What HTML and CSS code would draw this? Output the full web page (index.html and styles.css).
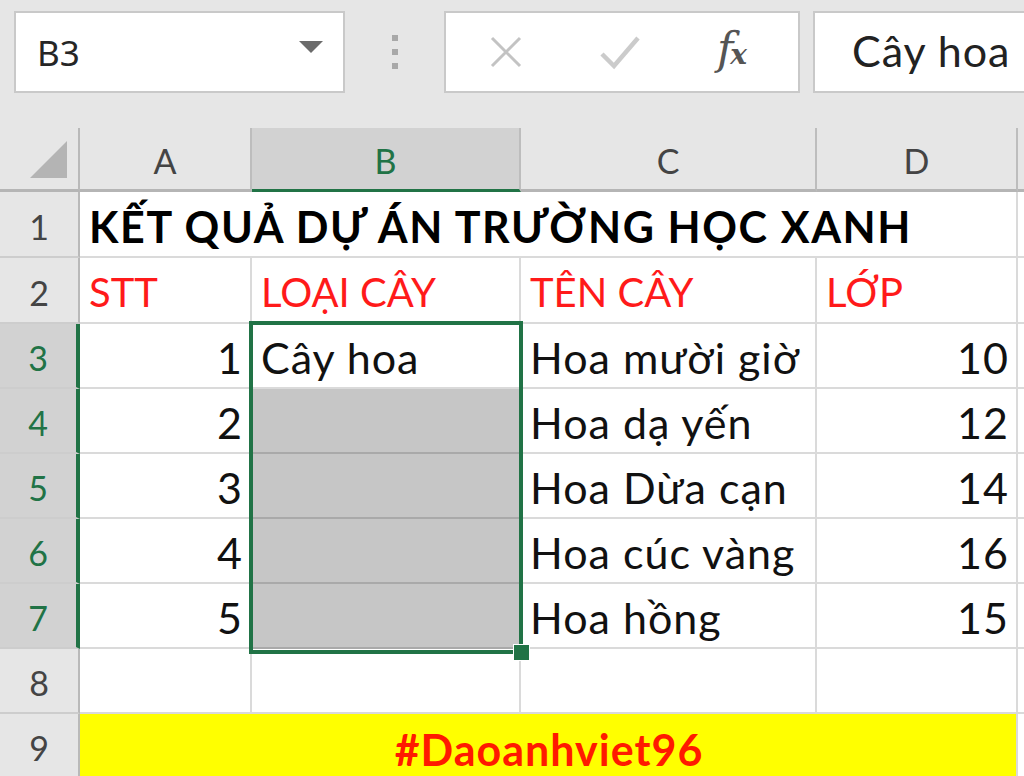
FILE: index.html
```html
<!DOCTYPE html>
<html lang="vi">
<head>
    <meta charset="UTF-8">
    <meta name="viewport" content="width=device-width, initial-scale=1.0">
    <title>Kết quả dự án trường học xanh</title>
    <link rel="stylesheet" href="styles.css">
</head>
<body>
    <div class="app">
        <div class="toolbar">
            <div class="name-box">
                <span class="name-text">B3</span>
                <span class="drop-arrow"></span>
            </div>
            <div class="grip">
                <span></span><span></span><span></span>
            </div>
            <div class="func-box">
                <svg class="icon-x" width="36" height="36" viewBox="0 0 36 36">
                    <path d="M4 4 L32 32 M32 4 L4 32" stroke="#c3c3c3" stroke-width="3" fill="none"/>
                </svg>
                <svg class="icon-check" width="42" height="36" viewBox="0 0 42 36">
                    <path d="M3 20 L15 32 L39 4" stroke="#cbcbcb" stroke-width="4.5" fill="none"/>
                </svg>
                <span class="icon-fx">f<span class="fx-x">x</span></span>
            </div>
            <div class="formula-input">Cây hoa</div>
        </div>

        <div class="sheet">
            <!-- header row -->
            <div class="corner"><span class="corner-tri"></span></div>
            <div class="col-head">A</div>
            <div class="col-head active">B</div>
            <div class="col-head">C</div>
            <div class="col-head">D</div>
            <div class="col-head last"></div>

            <!-- row 1 -->
            <div class="row-head">1</div>
            <div class="cell title span-4">KẾT QUẢ DỰ ÁN TRƯỜNG HỌC XANH</div>
            <div class="cell"></div>

            <!-- row 2 -->
            <div class="row-head">2</div>
            <div class="cell red">STT</div>
            <div class="cell red">LOẠI CÂY</div>
            <div class="cell red">TÊN CÂY</div>
            <div class="cell red">LỚP</div>
            <div class="cell"></div>

            <!-- row 3 -->
            <div class="row-head active">3</div>
            <div class="cell num">1</div>
            <div class="cell">Cây hoa</div>
            <div class="cell">Hoa mười giờ</div>
            <div class="cell num">10</div>
            <div class="cell"></div>

            <!-- row 4 -->
            <div class="row-head active">4</div>
            <div class="cell num">2</div>
            <div class="cell picked"></div>
            <div class="cell">Hoa dạ yến</div>
            <div class="cell num">12</div>
            <div class="cell"></div>

            <!-- row 5 -->
            <div class="row-head active">5</div>
            <div class="cell num">3</div>
            <div class="cell picked"></div>
            <div class="cell">Hoa Dừa cạn</div>
            <div class="cell num">14</div>
            <div class="cell"></div>

            <!-- row 6 -->
            <div class="row-head active">6</div>
            <div class="cell num">4</div>
            <div class="cell picked"></div>
            <div class="cell">Hoa cúc vàng</div>
            <div class="cell num">16</div>
            <div class="cell"></div>

            <!-- row 7 -->
            <div class="row-head active">7</div>
            <div class="cell num">5</div>
            <div class="cell picked"></div>
            <div class="cell">Hoa hồng</div>
            <div class="cell num">15</div>
            <div class="cell"></div>

            <!-- row 8 -->
            <div class="row-head">8</div>
            <div class="cell"></div>
            <div class="cell"></div>
            <div class="cell"></div>
            <div class="cell"></div>
            <div class="cell"></div>

            <!-- row 9 -->
            <div class="row-head">9</div>
            <div class="cell banner span-4">#Daoanhviet96</div>
            <div class="cell"></div>

            <!-- selection B3:B7 -->
            <div class="selection"><span class="fill-handle"></span></div>
        </div>
    </div>
</body>
</html>
```

FILE: styles.css
```css
body {
    margin: 0;
    background: #e6e6e6;
    font-family: 'Lato', 'Liberation Sans', sans-serif;
}

.app {
    width: 1024px;
    height: 776px;
    overflow: hidden;
    background: #e6e6e6;
}

/* formula bar */
.toolbar {
    height: 128px;
    box-sizing: border-box;
    padding-top: 11px;
    display: flex;
    align-items: flex-start;
}

.name-box {
    margin-left: 14px;
    width: 331px;
    height: 82px;
    box-sizing: border-box;
    background: #fff;
    border: 2px solid #c9c9c9;
    display: flex;
    align-items: center;
    padding-left: 21px;
    padding-right: 20px;
}

.name-text {
    font-family: 'Noto Sans', sans-serif;
    font-size: 35px;
    color: #262626;
    flex: 1;
}

.drop-arrow {
    width: 0;
    height: 0;
    border-left: 12px solid transparent;
    border-right: 12px solid transparent;
    border-top: 12px solid #6b6b6b;
    margin-top: -10px;
}

.grip {
    width: 99px;
    height: 82px;
    display: flex;
    flex-direction: column;
    align-items: center;
    justify-content: center;
    gap: 8px;
}

.grip span {
    width: 6px;
    height: 6px;
    background: #a8a8a8;
}

.func-box {
    width: 356px;
    height: 82px;
    box-sizing: border-box;
    background: #fff;
    border: 2px solid #c9c9c9;
    display: flex;
    align-items: center;
}

.icon-x {
    margin-left: 42px;
}

.icon-check {
    margin-left: 75px;
}

.icon-fx {
    margin-left: 76px;
    font-family: 'DejaVu Serif', 'Liberation Serif', serif;
    font-style: italic;
    font-size: 44px;
    color: #555;
    margin-top: -8px;
    letter-spacing: -3px;
}

.fx-x {
    font-size: 28px;
    font-weight: bold;
}

.formula-input {
    margin-left: 13px;
    flex: 1;
    height: 82px;
    box-sizing: border-box;
    background: #fff;
    border: 2px solid #c9c9c9;
    border-right: none;
    padding-left: 37px;
    font-size: 43px;
    letter-spacing: 1px;
    line-height: 76px;
    color: #222;
}

/* grid */
.sheet {
    position: relative;
    display: grid;
    grid-template-columns: 80px 172px 269px 296px 201px 1fr;
    grid-template-rows: 64px 66px 66px 65px 65px 65px 65px 65px 65px 65px;
    background: #fff;
}

.corner,
.col-head,
.row-head,
.cell {
    box-sizing: border-box;
}

.corner {
    background: #e6e6e6;
    border-right: 2px solid #b9b9b9;
    border-bottom: 3px solid #b5b5b5;
    position: relative;
}

.corner-tri {
    position: absolute;
    right: 11px;
    bottom: 11px;
    width: 0;
    height: 0;
    border-left: 37px solid transparent;
    border-bottom: 37px solid #b4b4b4;
}

.col-head {
    background: #e6e6e6;
    border-right: 2px solid #bdbdbd;
    border-bottom: 3px solid #b5b5b5;
    color: #444;
    font-size: 34px;
    display: flex;
    align-items: flex-end;
    justify-content: center;
    padding-bottom: 11px;
    line-height: 1;
}

.col-head.last {
    border-right: none;
}

.col-head.active {
    background: #d2d2d2;
    color: #217346;
    border-bottom-color: #217346;
}

.row-head {
    background: #e6e6e6;
    border-right: 2px solid #b9b9b9;
    border-bottom: 2px solid #cdcdcd;
    color: #444;
    font-size: 34px;
    display: flex;
    align-items: flex-end;
    justify-content: center;
    padding-bottom: 12px;
    line-height: 1;
}

.row-head.active {
    background: #d2d2d2;
    color: #217346;
    border-right: 4px solid #217346;
}

.cell {
    border-right: 2px solid #dadada;
    border-bottom: 2px solid #dadada;
    font-size: 43px;
    letter-spacing: 1px;
    line-height: 1;
    color: #111;
    display: flex;
    align-items: flex-end;
    padding: 0 7px 8px 9px;
    white-space: nowrap;
}

.cell.num {
    justify-content: flex-end;
}

.cell.red {
    color: #ff1a1a;
    font-size: 40px;
    letter-spacing: 0;
    padding-bottom: 10px;
}

.cell.title {
    font-weight: bold;
    color: #000;
    letter-spacing: 1.6px;
}

.cell.picked {
    background: #c6c6c6;
    border-bottom-color: #a9a9a9;
}

.span-4 {
    grid-column: span 4;
}

.cell.banner {
    background: #ffff00;
    color: #ff1a00;
    font-weight: bold;
    justify-content: center;
    border-bottom: none;
}

.selection {
    position: absolute;
    left: 249px;
    top: 193px;
    width: 274px;
    height: 333px;
    box-sizing: border-box;
    border: 4px solid #217346;
    pointer-events: none;
}

.fill-handle {
    position: absolute;
    right: -11px;
    bottom: -11px;
    width: 15px;
    height: 15px;
    background: #217346;
    border: 1px solid #fff;
}
```
